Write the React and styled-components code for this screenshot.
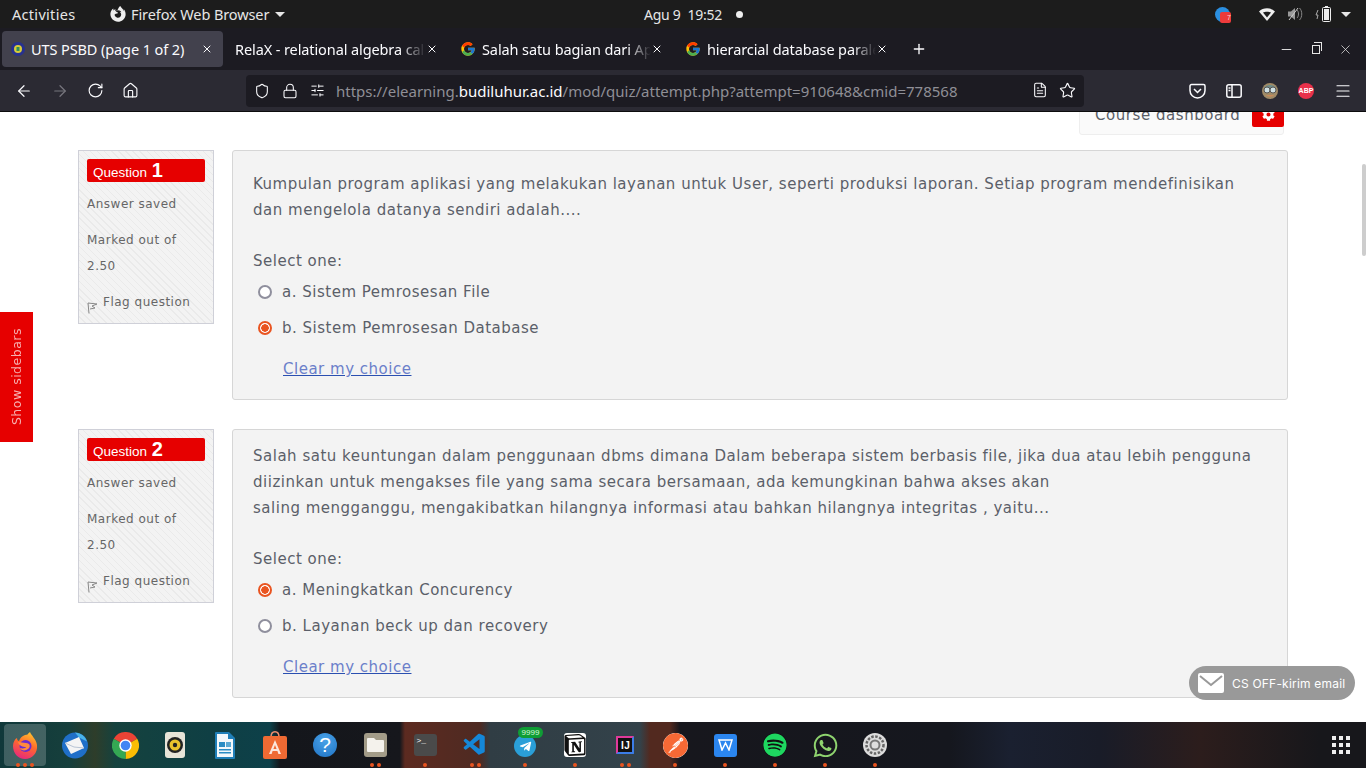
// Moodle quiz attempt page in Firefox on an Ubuntu desktop
import React from 'react'
import styled, { createGlobalStyle } from 'styled-components'
import {
  FaFirefoxBrowser, FaCog, FaSpotify, FaWhatsapp, FaTelegramPlane,
} from 'react-icons/fa'
import { FcGoogle } from 'react-icons/fc'
import { SiNotion, SiPostman } from 'react-icons/si'
import { VscVscode } from 'react-icons/vsc'
import {
  ArrowLeft, ArrowRight, RotateCw, Home, Shield, Lock, SlidersHorizontal, X, Plus,
  Minus, Star, Menu, FileText,
} from 'lucide-react'

const GlobalStyle = createGlobalStyle`
  html, body {
    margin: 0;
    padding: 0;
    width: 1366px;
    height: 768px;
    overflow: hidden;
    background: #fff;
  }
  * { box-sizing: border-box; }
`

const Desktop = styled.div`
  position: relative;
  width: 1366px;
  height: 768px;
  display: flex;
  flex-direction: column;
  overflow: hidden;
  font-family: "Noto Sans", sans-serif;
`

// Gnome top bar
const TopBar = styled.div`
  height: 28px;
  flex: none;
  background: #1c1c1c;
  color: #e6e6e6;
  font-size: 14.5px;
  letter-spacing: -0.1px;
  display: flex;
  align-items: center;
  padding-left: 12px;
`
const Activities = styled.span`
  width: 63px;
  letter-spacing: 0.3px;
`
const AppMenu = styled.div`
  display: flex;
  align-items: center;
  gap: 5px;
  margin-left: 35px;
  width: 534px;
`
const Caret = styled.span`
  display: inline-block;
  width: 0;
  height: 0;
  margin-left: ${props => props.$ml}px;
  border-left: 5px solid transparent;
  border-right: 5px solid transparent;
  border-top: 5px solid #e6e6e6;
`
const Clock = styled.div`
  display: flex;
  align-items: center;
  width: 571px;
  white-space: pre;
  font-size: 14px;
  letter-spacing: -0.25px;
`
const ClockDot = styled.span`
  width: 7px;
  height: 7px;
  border-radius: 50%;
  background: #eee;
  margin-left: 14px;
`
const Tray = styled.div`
  display: flex;
  align-items: center;
`
const TrayBadge = styled.div`
  position: relative;
  width: 15px;
  height: 15px;
  border-radius: 50%;
  background: #2b8fe0;
  margin-right: 26px;
`
const TrayCount = styled.span`
  position: absolute;
  right: -1px;
  bottom: -1px;
  width: 11px;
  height: 11px;
  border-radius: 2px;
  background: #ee3b3b;
  color: #ffd6d6;
  font: 7px/11px "Liberation Sans", sans-serif;
  letter-spacing: 0;
  text-align: right;
`
const TraySlot = styled.div`
  width: ${props => props.$w}px;
  display: flex;
  justify-content: center;
`

// Firefox tab strip
const TabStrip = styled.div`
  height: 42px;
  flex: none;
  background: #1c1b22;
  color: #fbfbfe;
  font-size: 14.5px;
  display: flex;
  align-items: center;
  padding-left: 2px;
`
const Tab = styled.div`
  width: ${props => props.$w}px;
  height: 36px;
  border-radius: 4px;
  background: ${props => (props.$active ? '#42414d' : 'transparent')};
  display: flex;
  align-items: center;
  gap: 6px;
  padding: 0 10px 0 ${props => (props.$active ? 9 : 12)}px;
  flex: none;
  & > svg { flex: none; }
`
const TabTitle = styled.span`
  flex: 1;
  min-width: 0;
  white-space: nowrap;
  letter-spacing: -0.1px;
  ${props => props.$fade && `
    -webkit-mask-image: linear-gradient(to right, #000 86%, transparent 100%);
    mask-image: linear-gradient(to right, #000 86%, transparent 100%);
  `}
`
const TabClose = styled.span`
  display: flex;
  flex: none;
  margin-left: ${props => (props.$tight ? -6 : 0)}px;
`
const WindowButtons = styled.div`
  display: flex;
  align-items: center;
  margin-left: auto;
  gap: 15px;
  padding-right: 13px;
  color: #e6e6e6;
`
const NewTab = styled.div`
  margin-left: 13px;
  display: flex;
`
const RestoreIcon = styled.div`
  position: relative;
  width: 8px;
  height: 9px;
  margin: 0 3px;
  border: 1.5px solid #e6e6e6;
  &::after {
    content: '';
    position: absolute;
    left: 1px;
    top: -4px;
    width: 7px;
    height: 8px;
    border-top: 1.5px solid #e6e6e6;
    border-right: 1.5px solid #e6e6e6;
  }
`

// Firefox nav bar
const NavBar = styled.div`
  height: 42px;
  flex: none;
  background: #2b2a33;
  border-bottom: 1px solid #0c0c0d;
  display: flex;
  align-items: center;
  color: #fbfbfe;
  padding-left: 15px;
`
const NavButtons = styled.div`
  display: flex;
  align-items: center;
  gap: 18px;
  width: 231px;
`
const UrlBar = styled.div`
  width: 838px;
  height: 32px;
  background: #1c1b22;
  border-radius: 4px;
  display: flex;
  align-items: center;
  padding: 0 8px;
  font-size: 15px;
  color: #8f8f96;
`
const UrlIcons = styled.div`
  display: flex;
  align-items: center;
  gap: 12px;
  margin-right: 11px;
`
const UrlHost = styled.span`
  color: #fbfbfe;
`
const UrlEnd = styled.div`
  margin-left: auto;
  display: flex;
  gap: 11px;
  color: #fbfbfe;
`
const NavRight = styled.div`
  display: flex;
  align-items: center;
  margin-left: 105px;
  gap: 20px;
`
const AbpBadge = styled.div`
  width: 16px;
  height: 16px;
  border-radius: 50%;
  background: #e8304a;
  color: #fff;
  font: bold 7px "Liberation Sans", sans-serif;
  display: flex;
  align-items: center;
  justify-content: center;
`

// Moodle page
const Page = styled.div`
  height: 610px;
  flex: none;
  overflow: hidden;
  background: #fff;
  font-family: "DejaVu Sans", sans-serif;
  color: #5b5f69;
`
const DashboardRow = styled.div`
  display: flex;
  justify-content: flex-end;
  padding-right: 82px;
  margin-top: -18px;
`
const DashboardBox = styled.div`
  width: 205px;
  height: 41px;
  background: #fafafa;
  border: 1px solid #eee;
  border-radius: 3px;
  display: flex;
  align-items: flex-start;
  justify-content: space-between;
  padding: 11px 0 0 15px;
  font-size: 15px;
  letter-spacing: 0.55px;
  line-height: 18px;
`
const GearButton = styled.div`
  width: 32px;
  height: 32px;
  margin-top: -11px;
  margin-right: -1px;
  background: #e60000;
  border-radius: 2px;
  color: #fff;
  display: flex;
  align-items: center;
  justify-content: center;
  padding-top: 6px;
`
const Questions = styled.div`
  display: flex;
  flex-direction: column;
  gap: 29px;
  padding: 15px 78px 0;
`
const QuestionRow = styled.div`
  display: grid;
  grid-template-columns: 136px 1056px;
  column-gap: 18px;
  align-items: start;
`
const InfoBox = styled.div`
  height: 174px;
  padding: 8px;
  border: 1px solid #cfd0d8;
  background: repeating-linear-gradient(45deg, #f3f3f3 0 4px, #eaeaea 4px 5px);
  font-size: 12px;
  letter-spacing: 0.5px;
  color: #666;
`
const QuestionTag = styled.div`
  height: 23px;
  background: #e60000;
  border-radius: 2px;
  color: #fff;
  font-family: "Liberation Sans", sans-serif;
  font-size: 13.5px;
  letter-spacing: 0;
  line-height: 23px;
  padding-left: 6px;
  white-space: nowrap;
`
const QuestionNumber = styled.b`
  font-size: 20px;
  margin-left: 1px;
`
const InfoText = styled.div`
  margin-top: ${props => props.$top}px;
  line-height: 26px;
`
const FlagRow = styled.div`
  display: flex;
  align-items: flex-start;
  gap: 5px;
  margin-top: 13px;
  line-height: 20px;
`
const FlagIcon = styled.svg`
  width: 11px;
  height: 13px;
  margin-top: 9px;
  flex: none;
`
const MainBox = styled.div`
  height: ${props => props.$h}px;
  padding: ${props => props.$pad}px 20px 0;
  background: #f3f3f3;
  border: 1px solid #d6d6d6;
  border-radius: 3px;
`
const QuestionText = styled.div`
  font-size: 15px;
  letter-spacing: 0.51px;
  line-height: 26px;
`
const SelectLabel = styled.div`
  margin-top: 25px;
  font-size: 15px;
  letter-spacing: 0.51px;
  line-height: 26px;
`
const Option = styled.div`
  display: flex;
  align-items: center;
  height: 36px;
  padding-left: 5px;
  font-size: 15px;
  letter-spacing: 0.51px;
  &:first-of-type { margin-top: 5px; }
`
const Radio = styled.span`
  width: 14px;
  height: 14px;
  border-radius: 50%;
  flex: none;
  margin-right: 10px;
  border: 2px solid ${props => (props.$checked ? '#e95420' : '#8f8f9d')};
  background: ${props => (props.$checked ? 'radial-gradient(circle, #e95420 0 3.5px, #fff 4px)' : '#fff')};
`
const ClearLink = styled.a`
  display: inline-block;
  margin: 10px 0 0 30px;
  font-size: 15px;
  letter-spacing: 0.51px;
  line-height: 26px;
  color: #6b7fca;
  text-decoration: underline;
  text-decoration-color: #2a4fb0;
`

// Things floating over the page
const SidebarToggle = styled.div`
  position: absolute;
  left: 0;
  top: 312px;
  width: 33px;
  height: 130px;
  background: #e60000;
  color: #f6b0b0;
  font-family: "DejaVu Sans", sans-serif;
  font-size: 12.5px;
  letter-spacing: 0.5px;
  display: flex;
  align-items: center;
  justify-content: center;
  writing-mode: vertical-rl;
  & > span { transform: rotate(180deg); }
`
const ChatBubble = styled.div`
  position: absolute;
  left: 1189px;
  top: 666px;
  width: 166px;
  height: 34px;
  border-radius: 17px;
  background: #999;
  color: #fff;
  font-family: Inter, sans-serif;
  font-size: 12px;
  letter-spacing: 0.2px;
  display: flex;
  align-items: center;
  gap: 8px;
  padding-left: 9px;
`
const ScrollThumb = styled.div`
  position: absolute;
  left: 1362px;
  top: 164px;
  width: 4px;
  height: 92px;
  border-radius: 2px;
  background: #cdcdcd;
`

// Dock
const Dock = styled.div`
  height: 46px;
  flex: none;
  display: flex;
  align-items: center;
  background: linear-gradient(to right,
    #10383a 0, #163f3c 70px, #2e3d2a 95px, #15423e 115px, #0f3f44 210px,
    #0d4049 270px, #14161b 280px, #16171c 400px, #5c2a20 405px, #4e2a22 480px,
    #303d44 490px, #33424a 640px, #52291f 650px, #52291f 670px, #17171d 680px,
    #15171e 950px, #1a2030 1010px, #191c28 1100px, #2c1d1c 1200px, #17171b 1320px);
`
const DockItem = styled.div`
  position: relative;
  width: 50px;
  height: 46px;
  display: flex;
  align-items: center;
  justify-content: center;
  flex: none;
  &::before {
    content: '';
    position: absolute;
    left: 4px;
    top: 2px;
    width: 42px;
    height: 42px;
    border-radius: 4px;
    background: ${props => (props.$active ? 'rgba(255,255,255,0.2)' : 'transparent')};
  }
`
const DockIcon = styled.div`
  position: relative;
  display: flex;
`
const RunningDots = styled.div`
  position: absolute;
  left: 0;
  right: 0;
  bottom: 1px;
  display: flex;
  justify-content: center;
  gap: 3px;
`
const RunDot = styled.span`
  width: 4px;
  height: 4px;
  border-radius: 50%;
  background: #e95420;
`
const GridButton = styled.div`
  margin-left: auto;
  margin-right: 16px;
  display: grid;
  grid-template-columns: repeat(3, 4px);
  gap: 3px;
`
const GridDot = styled.span`
  width: 4px;
  height: 4px;
  background: #eee;
`
const TileIcon = styled.div`
  width: ${props => props.$w || 26}px;
  height: ${props => props.$h || 28}px;
  border-radius: ${props => props.$r || 3}px;
  background: ${props => props.$bg};
  color: ${props => props.$fg || '#fff'};
  display: flex;
  align-items: center;
  justify-content: center;
  font-family: "Liberation Sans", sans-serif;
`
const HelpIcon = styled(TileIcon)`
  font-size: 21px;
  background: radial-gradient(circle at 50% 30%, #4aa3e8, #1f72c4);
`
const IdeaIcon = styled(TileIcon)`
  border: 2px solid;
  border-color: #e0399a #3b7de8 #3b7de8 #e0399a;
  font-size: 10px;
  font-weight: bold;
  letter-spacing: 0.5px;
  align-items: flex-start;
  justify-content: flex-start;
  padding: 2px 0 0 3px;
`
const TerminalIcon = styled(TileIcon)`
  font-family: "Liberation Mono", monospace;
  font-size: 8px;
  align-items: flex-start;
  justify-content: flex-start;
  padding: 2px 0 0 3px;
`
const TelegramBase = styled.div`
  width: 22px;
  height: 22px;
  margin-top: 2px;
  border-radius: 50%;
  background: #2a9fd8;
  display: flex;
  align-items: center;
  justify-content: center;
  color: #fff;
`
const CountBadge = styled.div`
  position: absolute;
  left: 18px;
  top: 5px;
  width: 25px;
  height: 11px;
  border-radius: 6px;
  background: #0f9d35;
  color: #d8f5d8;
  font-family: "Liberation Sans", sans-serif;
  font-size: 8px;
  line-height: 11px;
  text-align: center;
`

function FirefoxIcon() {
  return (
    <svg width="26" height="27" viewBox="0 0 26 27">
      <defs>
        <linearGradient id="ffx" x1="0.7" y1="0" x2="0.3" y2="1">
          <stop offset="0" stopColor="#ffc22e" />
          <stop offset="0.45" stopColor="#ff6a2c" />
          <stop offset="1" stopColor="#e8257f" />
        </linearGradient>
      </defs>
      <path d="M13 3c5-1 1 0 5-3 1 3 6 7 7 13 1 8-5 14-12 14S1 21 1 14C1 10 3 7 5 6c0 2 1 3 2 3 1-3 3-5 6-6z" fill="url(#ffx)" />
      <circle cx="13.500" cy="14" r="6" fill="#6a2bd0" />
      <path d="M6 10c3 0 5 1 8 1 4 0 5 4 2 6-2 2-7 2-8-1 3 1 6 0 6-1-3 0-7-1-8-5z" fill="#ff8a3c" />
    </svg>
  )
}

function MailIcon() {
  return (
    <svg width="26" height="27" viewBox="0 0 26 27">
      <circle cx="13" cy="13.500" r="13" fill="#1f6fc8" />
      <path d="M13 .5a13 13 0 0 1 12 9l-8-4z" fill="#49b3e8" />
      <path d="M3 11l14-6 5 11-13 6z" fill="#f4f4f4" />
      <path d="M3 11l9 4 10 1" fill="none" stroke="#b8c4d4" />
    </svg>
  )
}

function ChromeIcon() {
  return (
    <svg width="27" height="27" viewBox="0 0 48 48">
      <path d="M24 24 L3.200 12 A24 24 0 0 1 44.800 12 Z" fill="#ea4335" />
      <path d="M24 24 L44.800 12 A24 24 0 0 1 24 48 Z" fill="#fbbc04" />
      <path d="M24 24 L24 48 A24 24 0 0 1 3.200 12 Z" fill="#34a853" />
      <circle cx="24" cy="24" r="11" fill="#fff" />
      <circle cx="24" cy="24" r="8.500" fill="#4285f4" />
    </svg>
  )
}

function RhythmboxIcon() {
  return (
    <TileIcon $w={20} $h={26} $bg="#e8e4d8">
      <svg width="18" height="18" viewBox="0 0 18 18">
        <circle cx="9" cy="9" r="8" fill="#222" />
        <circle cx="9" cy="9" r="5.500" fill="#e8c22c" />
        <circle cx="9" cy="9" r="2.200" fill="#222" />
      </svg>
    </TileIcon>
  )
}

function WriterIcon() {
  return (
    <svg width="20" height="27" viewBox="0 0 20 27">
      <path d="M1 0h13l6 6v20a1 1 0 0 1-1 1H1a1 1 0 0 1-1-1V1a1 1 0 0 1 1-1z" fill="#1f7fb8" />
      <path d="M2 2h11v5h5v18H2z" fill="#f2f8fb" />
      <path d="M4 10h6v5H4zM4 17h12v1.400H4zM4 20h12v1.400H4z" fill="#2a8cc4" />
      <path d="M11 10h5v5h-5z" fill="#5aa9d4" />
    </svg>
  )
}

function StoreIcon() {
  return (
    <svg width="24" height="28" viewBox="0 0 24 28">
      <path d="M8 6c0-7 8-7 8 0" fill="none" stroke="#f09070" strokeWidth="1.500" />
      <rect x="0" y="5" width="24" height="23" rx="2" fill="#ef6a33" />
      <path d="M12 9l6 14h-2.600l-1-3H9.600l-1 3H6zm0 5l-1.600 4h3.200z" fill="#fbe6dc" />
    </svg>
  )
}

function FilesIcon() {
  return (
    <TileIcon $w={23} $h={24} $bg="#a39c88" $r={3}>
      <svg width="17" height="14" viewBox="0 0 17 14">
        <path d="M1 0h6l2 2h7a1 1 0 0 1 1 1v10a1 1 0 0 1-1 1H1a1 1 0 0 1-1-1V1a1 1 0 0 1 1-1z" fill="#f4f2ec" />
      </svg>
    </TileIcon>
  )
}

function WpsIcon() {
  return (
    <TileIcon $w={23} $h={23} $bg="#2b86ef">
      <svg width="15" height="12" viewBox="0 0 15 12" fill="none" stroke="#fff" strokeWidth="1.500">
        <path d="M1 1l3 10 3.500-7L11 11l3-10zM1 1h13" />
      </svg>
    </TileIcon>
  )
}

function GearDockIcon() {
  return (
    <svg width="24" height="24" viewBox="0 0 24 24">
      <circle cx="12" cy="12" r="12" fill="#ddd" />
      <circle cx="12" cy="12" r="8.500" fill="none" stroke="#666" strokeWidth="2.500" strokeDasharray="2.500 1.500" />
      <circle cx="12" cy="12" r="4.500" fill="none" stroke="#777" strokeWidth="2" />
    </svg>
  )
}

function WifiIcon() {
  return (
    <svg width="16" height="13" viewBox="0 0 16 13">
      <path d="M0 3.500C4-.8 12-.8 16 3.500L8 13z" fill="#eee" />
      <path d="M4 4.500c2-1 6-1 8 0L8 9.500z" fill="#1c1c1c" />
    </svg>
  )
}

function VolumeIcon() {
  return (
    <svg width="15" height="14" viewBox="0 0 15 14">
      <path d="M0 4.500h3L7 1v12L3 9.500H0z" fill="#999" />
      <path d="M9 3c2 2 2 6 0 8M11.500 1c3 3 3 9 0 12" fill="none" stroke="#888" />
      <path d="M1 13L10 1" stroke="#ccc" />
    </svg>
  )
}

function BatteryIcon() {
  return (
    <svg width="18" height="18" viewBox="0 0 18 18">
      <path d="M3 5L1 10h2L2 14" fill="none" stroke="#aaa" />
      <rect x="7.500" y="2.500" width="8" height="14" rx="1" fill="none" stroke="#eee" />
      <rect x="10" y="1" width="3" height="1.500" fill="#eee" />
      <rect x="9" y="4" width="5" height="11" fill="#eee" />
    </svg>
  )
}

function PocketIcon() {
  return (
    <svg width="17" height="16" viewBox="0 0 17 16" fill="none" stroke="#fbfbfe" strokeWidth="1.500">
      <path d="M2.500 1.500h12a1.500 1.500 0 0 1 1.500 1.500v4.500a7.500 7.500 0 0 1-15 0V3a1.500 1.500 0 0 1 1.500-1.500z" />
      <path d="M5 6l3.500 3.500L12 6" />
    </svg>
  )
}

function SidebarIcon() {
  return (
    <svg width="16" height="14" viewBox="0 0 16 14" fill="none" stroke="#fbfbfe" strokeWidth="1.500">
      <rect x="0.800" y="0.800" width="14.400" height="12.400" rx="2" />
      <path d="M6 1v12M2.500 4h2M2.500 6.500h2" />
    </svg>
  )
}

function OwlAvatar() {
  return (
    <svg width="16" height="16" viewBox="0 0 16 16">
      <circle cx="8" cy="8" r="8" fill="#a08a66" />
      <path d="M2 5c2-4 10-4 12 0z" fill="#6f8c8a" />
      <circle cx="5" cy="7" r="3" fill="#cfe0e4" stroke="#555" />
      <circle cx="11" cy="7" r="3" fill="#cfe0e4" stroke="#555" />
      <path d="M4 12c2 2 6 2 8 0z" fill="#c98a5a" />
    </svg>
  )
}

function SiteIcon() {
  return (
    <svg width="14" height="14" viewBox="0 0 14 14">
      <circle cx="7" cy="7" r="7" fill="#27318f" />
      <circle cx="7" cy="7" r="4" fill="#d8cc3a" />
      <rect x="5.500" y="5" width="3" height="4" fill="#2f8f5a" />
    </svg>
  )
}

function MailGlyph() {
  return (
    <svg width="26" height="20" viewBox="0 0 26 20">
      <rect width="26" height="20" rx="2" fill="#fff" />
      <path d="M2 3l11 9 11-9" fill="none" stroke="#999" strokeWidth="2" />
    </svg>
  )
}

const dockApps = [
  { key: 'firefox', icon: <FirefoxIcon />, dots: 3, active: true },
  { key: 'mail', icon: <MailIcon />, dots: 0 },
  { key: 'chrome', icon: <ChromeIcon />, dots: 0 },
  { key: 'rhythmbox', icon: <RhythmboxIcon />, dots: 0 },
  { key: 'writer', icon: <WriterIcon />, dots: 0 },
  { key: 'store', icon: <StoreIcon />, dots: 0 },
  { key: 'help', icon: <HelpIcon $w={24} $h={24} $r={12} $bg="#2a86d8">?</HelpIcon>, dots: 0 },
  { key: 'files', icon: <FilesIcon />, dots: 2 },
  { key: 'terminal', icon: <TerminalIcon $w={23} $h={22} $bg="#4a4a4a">{'>_'}</TerminalIcon>, dots: 1 },
  { key: 'vscode', icon: <VscVscode size={26} color="#1587d8" />, dots: 2 },
  { key: 'telegram', icon: <TelegramBase><FaTelegramPlane size={13} /></TelegramBase>, dots: 1, badge: '9999' },
  { key: 'notion', icon: <TileIcon $w={22} $h={24} $bg="#fff" $fg="#111"><SiNotion size={24} /></TileIcon>, dots: 1 },
  { key: 'idea', icon: <IdeaIcon $w={18} $h={18} $r={1} $bg="#111">IJ</IdeaIcon>, dots: 2 },
  { key: 'postman', icon: <SiPostman size={25} color="#f76935" style={{ background: '#fff', borderRadius: '50%' }} />, dots: 1 },
  { key: 'wps', icon: <WpsIcon />, dots: 1 },
  { key: 'spotify', icon: <FaSpotify size={24} color="#1ed760" style={{ background: '#111', borderRadius: '50%' }} />, dots: 1 },
  { key: 'whatsapp', icon: <FaWhatsapp size={27} color="#8fd46f" />, dots: 1 },
  { key: 'settings', icon: <GearDockIcon />, dots: 1 },
]

const questions = [
  {
    number: 1,
    height: 250,
    pad: 20,
    lines: ['Kumpulan program aplikasi yang melakukan layanan untuk User, seperti produksi laporan. Setiap program mendefinisikan', 'dan mengelola datanya sendiri adalah....'],
    options: [
      { label: 'a. Sistem Pemrosesan File', checked: false },
      { label: 'b. Sistem Pemrosesan Database', checked: true },
    ],
  },
  {
    number: 2,
    height: 269,
    pad: 13,
    lines: [
      'Salah satu keuntungan dalam penggunaan dbms dimana Dalam beberapa sistem berbasis file, jika dua atau lebih pengguna',
      'diizinkan untuk mengakses file yang sama secara bersamaan, ada kemungkinan bahwa akses akan',
      'saling mengganggu, mengakibatkan hilangnya informasi atau bahkan hilangnya integritas , yaitu...',
    ],
    options: [
      { label: 'a. Meningkatkan Concurency', checked: true },
      { label: 'b. Layanan beck up dan recovery', checked: false },
    ],
  },
]

const tabs = [
  { title: 'RelaX - relational algebra cal', google: false },
  { title: 'Salah satu bagian dari Ap', google: true },
  { title: 'hierarcial database parale', google: true },
]

function QuestionBlock({ question }) {
  return (
    <QuestionRow>
      <InfoBox>
        <QuestionTag>Question <QuestionNumber>{question.number}</QuestionNumber></QuestionTag>
        <InfoText $top={9}>Answer saved</InfoText>
        <InfoText $top={10}>Marked out of</InfoText>
        <InfoText $top={0}>2.50</InfoText>
        <FlagRow>
          <FlagIcon viewBox="0 0 11 13">
            <path d="M2 12.500L1 2l9 1-5 2 3 2-5 1" fill="none" stroke="#888" />
          </FlagIcon>
          <span>Flag question</span>
        </FlagRow>
      </InfoBox>
      <MainBox $h={question.height} $pad={question.pad}>
        <QuestionText>
          {question.lines.map(line => <div key={line}>{line}</div>)}
        </QuestionText>
        <SelectLabel>Select one:</SelectLabel>
        {question.options.map(option => (
          <Option key={option.label}>
            <Radio $checked={option.checked} />
            {option.label}
          </Option>
        ))}
        <ClearLink>Clear my choice</ClearLink>
      </MainBox>
    </QuestionRow>
  )
}

function App() {
  return (
    <Desktop>
      <GlobalStyle />
      <TopBar>
        <Activities>Activities</Activities>
        <AppMenu>
          <FaFirefoxBrowser size={16} color="#eee" />
          <span>Firefox Web Browser</span>
          <Caret $ml={1} />
        </AppMenu>
        <Clock>
          <span>Agu 9  19:52</span>
          <ClockDot />
        </Clock>
        <Tray>
          <TrayBadge><TrayCount>7</TrayCount></TrayBadge>
          <TraySlot $w={22}><WifiIcon /></TraySlot>
          <TraySlot $w={34}><VolumeIcon /></TraySlot>
          <TraySlot $w={24}><BatteryIcon /></TraySlot>
          <Caret $ml={5} />
        </Tray>
      </TopBar>

      <TabStrip>
        <Tab $w={221} $active>
          <SiteIcon />
          <TabTitle>UTS PSBD (page 1 of 2)</TabTitle>
          <TabClose><X size={12} /></TabClose>
        </Tab>
        {tabs.map(tab => (
          <Tab $w={225} key={tab.title}>
            {tab.google && <FcGoogle size={16} />}
            <TabTitle $fade>{tab.title}</TabTitle>
            <TabClose $tight><X size={12} /></TabClose>
          </Tab>
        ))}
        <NewTab><Plus size={16} /></NewTab>
        <WindowButtons>
          <Minus size={15} strokeWidth={1.5} />
          <RestoreIcon />
          <X size={15} strokeWidth={1.2} />
        </WindowButtons>
      </TabStrip>

      <NavBar>
        <NavButtons>
          <ArrowLeft size={18} strokeWidth={1.6} />
          <ArrowRight size={18} strokeWidth={1.6} color="#77767e" />
          <RotateCw size={17} strokeWidth={1.6} />
          <Home size={17} strokeWidth={1.6} />
        </NavButtons>
        <UrlBar>
          <UrlIcons>
            <Shield size={16} strokeWidth={1.6} color="#fbfbfe" />
            <Lock size={16} strokeWidth={1.6} color="#fbfbfe" />
            <SlidersHorizontal size={15} strokeWidth={1.6} color="#fbfbfe" />
          </UrlIcons>
          <span>https://elearning.<UrlHost>budiluhur.ac.id</UrlHost>/mod/quiz/attempt.php?attempt=910648&amp;cmid=778568</span>
          <UrlEnd>
            <FileText size={16} strokeWidth={1.6} />
            <Star size={17} strokeWidth={1.6} />
          </UrlEnd>
        </UrlBar>
        <NavRight>
          <PocketIcon />
          <SidebarIcon />
          <OwlAvatar />
          <AbpBadge>ABP</AbpBadge>
          <Menu size={18} strokeWidth={1.6} />
        </NavRight>
      </NavBar>

      <Page>
        <DashboardRow>
          <DashboardBox>
            <span>Course dashboard</span>
            <GearButton><FaCog size={13} /></GearButton>
          </DashboardBox>
        </DashboardRow>
        <Questions>
          {questions.map(q => <QuestionBlock key={q.number} question={q} />)}
        </Questions>
      </Page>

      <Dock>
        {dockApps.map(app => (
          <DockItem key={app.key} $active={app.active}>
            <DockIcon>{app.icon}</DockIcon>
            {app.badge && <CountBadge>{app.badge}</CountBadge>}
            <RunningDots>
              {Array.from({ length: app.dots }, (_, i) => <RunDot key={i} />)}
            </RunningDots>
          </DockItem>
        ))}
        <GridButton>
          {Array.from({ length: 9 }, (_, i) => <GridDot key={i} />)}
        </GridButton>
      </Dock>

      <SidebarToggle><span>Show sidebars</span></SidebarToggle>
      <ChatBubble>
        <MailGlyph />
        <span>CS OFF-kirim email</span>
      </ChatBubble>
      <ScrollThumb />
    </Desktop>
  )
}

export default App
